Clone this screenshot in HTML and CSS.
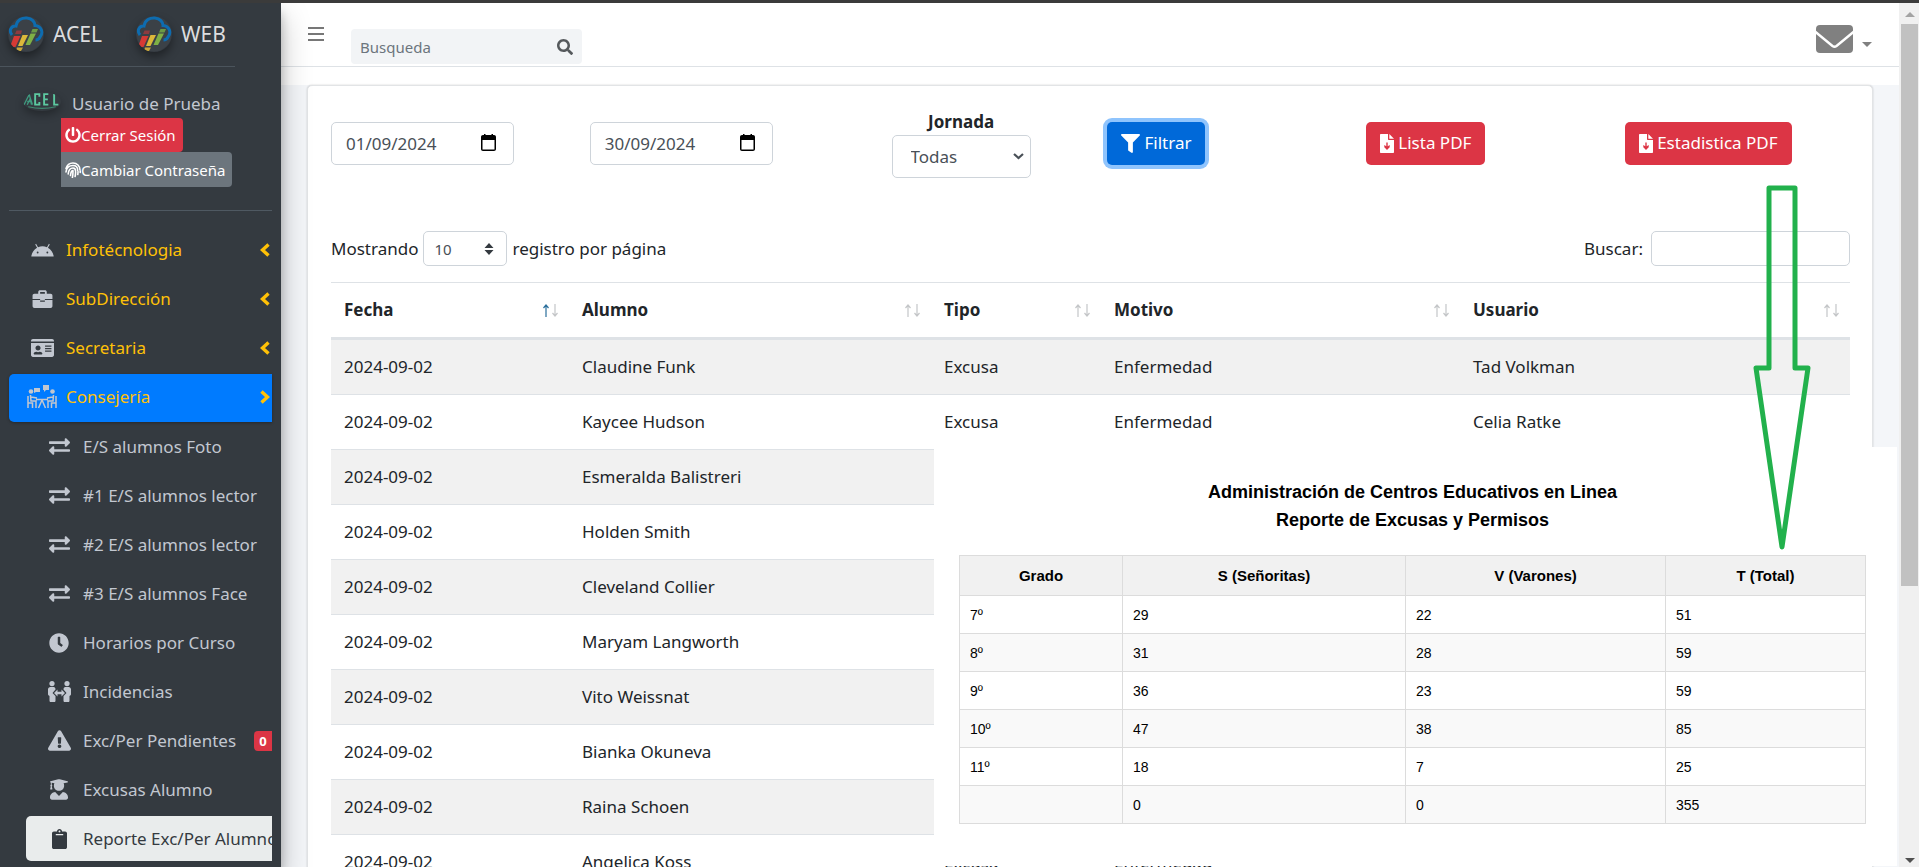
FILE: index.html
```html
<!DOCTYPE html>
<html lang="es">
<head>
<meta charset="utf-8">
<title>ACEL WEB</title>
<link rel="stylesheet" href="styles.css">
</head>
<body>
<svg class="sprite" aria-hidden="true">
  <symbol id="logo" viewBox="0 0 36 36">
    <circle cx="18" cy="18" r="17.500" fill="#3b4147"/>
    <path d="M4 19C0 14 4 9.500 8 10C9 4 14 1.500 19 2C24 2.500 27 6 27 9.500C33 10 36 16 32 21C31 23 29 24 27.500 24" fill="none" stroke="#0d6cb0" stroke-width="3"/>
    <path d="M6 20h6.500l-5 11H2z" fill="#d63a35"/><path d="M8.500 14.500H14L13 18H7z" fill="#8d3b3f"/>
    <path d="M14.500 19H20l-5.500 11H10z" fill="#dcb83a"/><path d="M9 31.500h6L13 35H8z" fill="#c9a83a"/>
    <path d="M22.500 17.500H28L22 29h-4.500z" fill="#7fb045"/><path d="M24.500 13H30l-1.500 3.500H23z" fill="#6b9a45"/>
  </symbol>
  <symbol id="power" viewBox="0 0 512 512"><path d="M400 54.1c63 45 104 118.600 104 201.900 0 136.800-110.800 247.700-247.500 248C120 504.300 8.200 393 8 256.400 7.900 173.100 48.900 99.300 111.800 54.200c11.700-8.300 28-4.800 35 7.700L162.600 90c5.900 10.500 3.100 23.800-6.600 31-41.500 30.800-68 79.600-68 134.900-.1 92.300 74.500 168.100 168 168.100 91.600 0 168.600-74.200 168-169.100-.3-51.800-24.700-101.800-68.100-134-9.700-7.200-12.400-20.500-6.500-30.900l15.800-28.100c7-12.400 23.200-16.100 34.800-7.800zM296 264V24c0-13.300-10.700-24-24-24h-32c-13.300 0-24 10.700-24 24v240c0 13.300 10.700 24 24 24h32c13.300 0 24-10.700 24-24z"/></symbol>
  <symbol id="finger" viewBox="0 0 16 16"><path d="M1 6.500C2 3 5 1 8 1c4 0 7 3 7 7M1 10C1.500 6 4 3.500 8 3.500c3 0 4.700 2 4.700 5M3.200 12C3.500 8.500 4.500 6 8 6c2 0 2.600 1.500 2.600 3.500M5.500 13.500C6 11 5.800 8.500 8 8.500M8 9c0 2 0 4-.6 6.500M10.600 10c0 1.500-.1 3-.5 4.500M13 9.500c0 1.200 0 2-.2 3M15.200 9v1.500" fill="none" stroke="currentColor" stroke-width="1.600" stroke-linecap="round"/></symbol>
  <symbol id="android" viewBox="0 0 24 15"><path d="M0 14.500C.4 10.500 2.800 7 6.200 5L4.200 1.500 5.100.9 7.200 4.500a12 12 0 0 1 9.600 0L18.900.9l.9.600-2 3.500c3.400 2 5.800 5.500 6.200 9.500zM6.800 9.200a1 1 0 1 0 0 2 1 1 0 0 0 0-2zm10.400 0a1 1 0 1 0 0 2 1 1 0 0 0 0-2z"/></symbol>
  <symbol id="case" viewBox="0 0 21 19"><path fill-rule="evenodd" d="M6 4V2.200C6 1 6.800.3 8 .3h5c1.200 0 2 .7 2 1.900V4h4c1.200 0 2 .8 2 2v3.500H13V11H8V9.500H0V6c0-1.200.8-2 2-2zm2 0h5V2.200H8zM0 10.500h8v1.800h5v-1.800h8V17c0 1.200-.8 2-2 2H2c-1.200 0-2-.8-2-2z"/></symbol>
  <symbol id="idcard" viewBox="0 32 576 448"><path d="M528 32H48C21.500 32 0 53.500 0 80v16h576V80c0-26.500-21.500-48-48-48zM0 432c0 26.500 21.500 48 48 48h480c26.500 0 48-21.500 48-48V128H0v304zM352 192h160v32H352zm0 64h160v32H352zm0 64h160v32H352zM176 192c35.300 0 64 28.700 64 64s-28.700 64-64 64-64-28.700-64-64 28.700-64 64-64zM67.100 396.200C75.500 370.500 99.600 352 128 352h8.200c12.300 5.100 25.700 8 39.800 8s27.600-2.900 39.800-8h8.200c28.400 0 52.500 18.500 60.900 44.200 3.200 9.900-5.200 19.800-15.600 19.800H82.700c-10.400 0-18.800-10-15.600-19.800z" fill-rule="evenodd"/></symbol>
  <symbol id="meeting" viewBox="0 0 30 24"><path d="M7 3h6v4H9L7 8zM16 0h6v5h-3l-2 2V5h-1z"/><circle cx="4" cy="6.500" r="2.300"/><circle cx="25.500" cy="6.500" r="2.300"/><path d="M1 11v12M29 11v12M3.500 10l.5 6h5v7M26.500 10l-.5 6h-5v7M4 12l6 1M26 12l-6 1M9 14.500h12M15 15l-3.500 8M15 15l3.500 8M1.500 18h4v5M28.500 18h-4v5" fill="none" stroke="currentColor" stroke-width="1.500"/></symbol>
  <symbol id="chev" viewBox="0 0 10 14"><path d="M8.500 1.500L2.500 7l6 5.500" fill="none" stroke="currentColor" stroke-width="3.400"/></symbol>
  <symbol id="swap" viewBox="0 50 512 412"><path d="M0 168v-16c0-13.255 10.745-24 24-24h360V80c0-21.367 25.899-32.042 40.971-16.971l80 80c9.372 9.373 9.372 24.569 0 33.941l-80 80C409.956 271.982 384 261.456 384 240v-48H24c-13.255 0-24-10.745-24-24zm488 152H128v-48c0-21.314-25.862-32.080-40.971-16.971l-80 80c-9.372 9.373-9.372 24.569 0 33.941l80 80C102.057 463.997 128 453.437 128 432v-48h360c13.255 0 24-10.745 24-24v-16c0-13.255-10.745-24-24-24z"/></symbol>
  <symbol id="clock" viewBox="0 0 512 512"><path d="M256,8C119,8,8,119,8,256S119,504,256,504,504,393,504,256,393,8,256,8Zm92.490,313h0l-20,25a16,16,0,0,1-22.490,2.500h0l-67-49.720a40,40,0,0,1-15-31.230V112a16,16,0,0,1,16-16h32a16,16,0,0,1,16,16V256l58,42.500A16,16,0,0,1,348.490,321Z"/></symbol>
  <symbol id="people" viewBox="0 0 23 21"><circle cx="4" cy="2.600" r="2.600"/><circle cx="19" cy="2.600" r="2.600"/><path d="M2.500 6h3C7 6 7.500 7 7.500 8.500L4.500 12l3 3v4.500c0 1-.5 1.500-1.500 1.500H3c-1 0-1.500-.5-1.500-1.500V15C.5 14.500 0 14 0 13V8.500C0 7 1 6 2.500 6zM20.500 6h-3C16 6 15.500 7 15.500 8.500l3 3.500-3 3v4.500c0 1 .5 1.500 1.500 1.500h3c1 0 1.500-.5 1.500-1.500V15c1-.5 1.500-1 1.500-2V8.500C23 7 22 6 20.500 6zM9.500 8.500v2.300h4V8.500L17 12l-3.500 3.500v-2.300h-4v2.300L6 12z"/></symbol>
  <symbol id="warn" viewBox="0 0 576 512"><path d="M569.517 440.013C587.975 472.007 564.806 512 527.940 512H48.054c-36.937 0-59.999-40.055-41.577-71.987L246.423 23.985c18.467-32.009 64.720-31.951 83.154 0l239.940 416.028zM288 354c-25.405 0-46 20.595-46 46s20.595 46 46 46 46-20.595 46-46-20.595-46-46-46zm-43.673-165.346l7.418 136c.347 6.364 5.609 11.346 11.982 11.346h48.546c6.373 0 11.635-4.982 11.982-11.346l7.418-136c.375-6.874-5.098-12.654-11.982-12.654h-63.383c-6.884 0-12.356 5.780-11.981 12.654z"/></symbol>
  <symbol id="grad" viewBox="0 0 448 512"><path d="M319.400 320.600L224 416l-95.400-95.400C57.100 323.700 0 382.200 0 454.400v9.600c0 26.500 21.500 48 48 48h352c26.500 0 48-21.500 48-48v-9.600c0-72.200-57.100-130.700-128.600-133.800zM13.600 79.800l6.400 1.500v58.400c-7 4.200-12 11.500-12 20.300 0 8.400 4.600 15.400 11.100 19.700L3.500 242c-1.700 6.900 2.100 14 7.600 14h41.800c5.500 0 9.300-7.100 7.600-14l-15.600-62.300C51.400 175.400 56 168.400 56 160c0-8.800-5-16.100-12-20.300V87.100l66 15.900c-8.600 17.200-14 36.400-14 57 0 70.700 57.300 128 128 128s128-57.300 128-128c0-20.600-5.300-39.800-14-57l96.300-23.200c18.200-4.400 18.200-27.100 0-31.500l-190.400-46c-13-3.100-26.700-3.100-39.700 0L13.600 48.200c-18.100 4.400-18.100 27.200 0 31.600z"/></symbol>
  <symbol id="clip" viewBox="0 0 384 512"><path d="M384 112v352c0 26.510-21.490 48-48 48H48c-26.510 0-48-21.490-48-48V112c0-26.510 21.490-48 48-48h80c0-35.290 28.710-64 64-64s64 28.710 64 64h80c26.510 0 48 21.490 48 48zM192 40c-13.255 0-24 10.745-24 24s10.745 24 24 24 24-10.745 24-24-10.745-24-24-24m96 114v-20a6 6 0 0 0-6-6H102a6 6 0 0 0-6 6v20a6 6 0 0 0 6 6h180a6 6 0 0 0 6-6z"/></symbol>
  <symbol id="search" viewBox="0 0 512 512"><path d="M505 442.700L405.300 343c-4.500-4.500-10.600-7-17-7H372c27.600-35.300 44-79.700 44-128C416 93.100 322.900 0 208 0S0 93.100 0 208s93.100 208 208 208c48.300 0 92.700-16.400 128-44v16.300c0 6.400 2.500 12.500 7 17l99.700 99.700c9.400 9.400 24.600 9.400 33.900 0l28.300-28.300c9.400-9.400 9.400-24.600.1-34zM208 336c-70.700 0-128-57.200-128-128 0-70.700 57.200-128 128-128 70.700 0 128 57.200 128 128 0 70.700-57.200 128-128 128z"/></symbol>
  <symbol id="mail" viewBox="0 0 37 28"><rect width="37" height="28" rx="4"/><path d="M-1 6.500L16.500 21q2 1.500 4 0L38 6.500" fill="none" stroke="#fff" stroke-width="2.400"/></symbol>
  <symbol id="filter" viewBox="0 0 512 512"><path d="M487.976 0H24.028C2.710 0-8.047 25.866 7.058 40.971L192 225.941V432c0 7.831 3.821 15.170 10.237 19.662l80 55.980C298.020 518.690 320 507.493 320 487.980V225.941l184.947-184.970C520.021 25.896 509.338 0 487.976 0z"/></symbol>
  <symbol id="file" viewBox="0 0 14 19"><path fill-rule="evenodd" d="M8 0v5c0 .6.400 1 1 1h5v12c0 .6-.4 1-1 1H1c-.6 0-1-.4-1-1V1c0-.6.400-1 1-1zM6.300 8.500v3.800l-2-1.300v2.200L7 16l2.700-2.800V11l-2 1.300V8.500z"/><path d="M9.300 0L14 4.700H9.300z"/></symbol>
  <symbol id="cal" viewBox="0 0 15 17"><path fill-rule="evenodd" d="M2 1h1V0h1.500v1h6V0H12v1h1c1.200 0 2 .8 2 2v12c0 1.200-.8 2-2 2H2c-1.200 0-2-.8-2-2V3c0-1.200.8-2 2-2zM1.500 6v9.500h12V6z"/></symbol>
  <symbol id="updown" viewBox="0 0 10 12"><path d="M5 0l4.500 5h-9zM5 12l4.500-5h-9z"/></symbol>
  <symbol id="down" viewBox="0 0 11 7"><path d="M1 1l4.500 4L10 1" fill="none" stroke="currentColor" stroke-width="2.200"/></symbol>
  <symbol id="sort-up" viewBox="0 0 6 13"><path d="M3 13V1M.5 4L3 1l2.500 3" fill="none" stroke="currentColor" stroke-width="1.200"/></symbol>
  <symbol id="sort-down" viewBox="0 0 6 13"><path d="M3 0v12M.5 9L3 12l2.500-3" fill="none" stroke="currentColor" stroke-width="1.200"/></symbol>
</svg>

<div class="strip"></div>
<div class="app">
  <aside class="sidebar">
    <div class="brand">
      <a href="#"><svg class="logo"><use href="#logo"/></svg>ACEL</a>
      <a href="#"><svg class="logo"><use href="#logo"/></svg>WEB</a>
    </div>
    <div class="user">
      <svg class="avatar" viewBox="0 0 36 18">
        <path d="M1 12L6 2l2 10M4 12l3-6 2 6M4 9h4" fill="none" stroke="#3f9c80" stroke-width="1.200"/>
        <path d="M15.500 4.500V2h-4v10h4V9.500M24 2h-4v10h4M20 7h3.500M29.500 2v10h4" fill="none" stroke="#5cc9a0" stroke-width="1.800"/>
        <path d="M5 14q13 3 26 0" fill="none" stroke="#3f8a70" stroke-width="1"/>
      </svg>
      <div class="user-info">
        <a class="user-name" href="#">Usuario de Prueba</a>
        <button class="side-btn red"><svg><use href="#power"/></svg>Cerrar Sesión</button>
        <button class="side-btn gray"><svg><use href="#finger"/></svg>Cambiar Contraseña</button>
      </div>
    </div>
    <nav class="menu">
      <a class="item" href="#"><span class="ico"><svg width="23" height="14"><use href="#android"/></svg></span>Infotécnologia<svg class="chev"><use href="#chev"/></svg></a>
      <a class="item" href="#"><span class="ico"><svg width="21" height="18"><use href="#case"/></svg></span>SubDirección<svg class="chev"><use href="#chev"/></svg></a>
      <a class="item" href="#"><span class="ico"><svg width="23" height="18"><use href="#idcard"/></svg></span>Secretaria<svg class="chev"><use href="#chev"/></svg></a>
      <a class="item open" href="#"><span class="ico"><svg width="30" height="24"><use href="#meeting"/></svg></span>Consejería<svg class="chev"><use href="#chev"/></svg></a>
    </nav>
    <nav class="submenu">
      <a class="sub" href="#"><span class="ico"><svg width="21" height="17"><use href="#swap"/></svg></span>E/S alumnos Foto</a>
      <a class="sub" href="#"><span class="ico"><svg width="21" height="17"><use href="#swap"/></svg></span>#1 E/S alumnos lector</a>
      <a class="sub" href="#"><span class="ico"><svg width="21" height="17"><use href="#swap"/></svg></span>#2 E/S alumnos lector</a>
      <a class="sub" href="#"><span class="ico"><svg width="21" height="17"><use href="#swap"/></svg></span>#3 E/S alumnos Face</a>
      <a class="sub" href="#"><span class="ico"><svg width="20" height="20"><use href="#clock"/></svg></span>Horarios por Curso</a>
      <a class="sub" href="#"><span class="ico"><svg width="23" height="21"><use href="#people"/></svg></span>Incidencias</a>
      <a class="sub" href="#"><span class="ico"><svg width="23" height="21"><use href="#warn"/></svg></span>Exc/Per Pendientes<span class="badge">0</span></a>
      <a class="sub" href="#"><span class="ico"><svg width="18" height="21"><use href="#grad"/></svg></span>Excusas Alumno</a>
      <a class="sub current" href="#"><span class="ico"><svg width="15" height="20"><use href="#clip"/></svg></span>Reporte Exc/Per Alumno</a>
    </nav>
  </aside>

  <main class="main">
    <header class="navbar">
      <button class="burger" aria-label="Menú"><i></i><i></i><i></i></button>
      <form class="find">
        <input type="text" placeholder="Busqueda" aria-label="Busqueda">
        <button type="button" aria-label="Buscar"><svg><use href="#search"/></svg></button>
      </form>
      <button class="mail" aria-label="Mensajes"><svg><use href="#mail"/></svg><i></i></button>
    </header>
    <div class="band"></div>
    <section class="card">
      <form class="filters">
        <div class="date"><input type="text" value="01/09/2024" aria-label="Desde"><svg><use href="#cal"/></svg></div>
        <div class="date"><input type="text" value="30/09/2024" aria-label="Hasta"><svg><use href="#cal"/></svg></div>
        <div class="shift">
          <label for="shift">Jornada</label>
          <span class="pick"><select id="shift"><option>Todas</option></select><svg><use href="#down"/></svg></span>
        </div>
        <button type="button" class="btn blue"><svg width="19" height="19"><use href="#filter"/></svg>Filtrar</button>
        <button type="button" class="btn danger"><svg width="14" height="19"><use href="#file"/></svg>Lista PDF</button>
        <button type="button" class="btn danger"><svg width="14" height="19"><use href="#file"/></svg>Estadistica PDF</button>
      </form>
      <div class="tools">
        <label class="len">Mostrando <span class="pick small"><select><option>10</option></select><svg><use href="#updown"/></svg></span> registro por página</label>
        <label class="seek">Buscar: <input type="search"></label>
      </div>
      <table class="data">
        <colgroup><col class="c1"><col class="c2"><col class="c3"><col class="c4"><col></colgroup>
        <thead><tr>
          <th class="asc"><div>Fecha<span class="sort"><svg><use href="#sort-up"/></svg><svg><use href="#sort-down"/></svg></span></div></th>
          <th><div>Alumno<span class="sort"><svg><use href="#sort-up"/></svg><svg><use href="#sort-down"/></svg></span></div></th>
          <th><div>Tipo<span class="sort"><svg><use href="#sort-up"/></svg><svg><use href="#sort-down"/></svg></span></div></th>
          <th><div>Motivo<span class="sort"><svg><use href="#sort-up"/></svg><svg><use href="#sort-down"/></svg></span></div></th>
          <th><div>Usuario<span class="sort"><svg><use href="#sort-up"/></svg><svg><use href="#sort-down"/></svg></span></div></th>
        </tr></thead>
        <tbody>
          <tr><td>2024-09-02</td><td>Claudine Funk</td><td>Excusa</td><td>Enfermedad</td><td>Tad Volkman</td></tr>
          <tr><td>2024-09-02</td><td>Kaycee Hudson</td><td>Excusa</td><td>Enfermedad</td><td>Celia Ratke</td></tr>
          <tr><td>2024-09-02</td><td>Esmeralda Balistreri</td><td></td><td></td><td></td></tr>
          <tr><td>2024-09-02</td><td>Holden Smith</td><td></td><td></td><td></td></tr>
          <tr><td>2024-09-02</td><td>Cleveland Collier</td><td></td><td></td><td></td></tr>
          <tr><td>2024-09-02</td><td>Maryam Langworth</td><td></td><td></td><td></td></tr>
          <tr><td>2024-09-02</td><td>Vito Weissnat</td><td></td><td></td><td></td></tr>
          <tr><td>2024-09-02</td><td>Bianka Okuneva</td><td></td><td></td><td></td></tr>
          <tr><td>2024-09-02</td><td>Raina Schoen</td><td></td><td></td><td></td></tr>
          <tr><td>2024-09-02</td><td>Angelica Koss</td><td>Excusa</td><td>Enfermedad</td><td></td></tr>
        </tbody>
      </table>
    </section>
  </main>
  <div class="scroll"><i class="up"></i><div class="thumb"></div><i class="dn"></i></div>
</div>

<section class="report">
  <h2>Administración de Centros Educativos en Linea</h2>
  <h2>Reporte de Excusas y Permisos</h2>
  <table>
    <colgroup><col class="g1"><col class="g2"><col class="g3"><col></colgroup>
    <thead><tr><th>Grado</th><th>S (Señoritas)</th><th>V (Varones)</th><th>T (Total)</th></tr></thead>
    <tbody>
      <tr><td>7º</td><td>29</td><td>22</td><td>51</td></tr>
      <tr><td>8º</td><td>31</td><td>28</td><td>59</td></tr>
      <tr><td>9º</td><td>36</td><td>23</td><td>59</td></tr>
      <tr><td>10º</td><td>47</td><td>38</td><td>85</td></tr>
      <tr><td>11º</td><td>18</td><td>7</td><td>25</td></tr>
      <tr><td></td><td>0</td><td>0</td><td>355</td></tr>
    </tbody>
  </table>
</section>
<svg class="arrow" viewBox="0 0 60 368" aria-hidden="true"><path d="M17 4H43V184H56L30 363L4 184H17Z" fill="none" stroke="#22b14c" stroke-width="5" stroke-linejoin="round"/></svg>
</body>
</html>
```

FILE: styles.css
```css
* { box-sizing: border-box; }
body {
  margin: 0;
  height: 100vh;
  display: flex;
  flex-direction: column;
  overflow: hidden;
  position: relative;
  background: #f4f6f9;
  color: #212529;
  font: 17px/28px "Noto Sans", "Open Sans", sans-serif;
}
.sprite { display: none; }
svg { fill: currentColor; flex: none; }
a { color: inherit; text-decoration: none; }
button, input, select { font: inherit; color: inherit; margin: 0; }
button { border: 0; background: none; padding: 0; cursor: pointer; }

.strip { height: 3px; flex: none; background: #3b3b3b; }
.app { flex: 1; min-height: 0; display: flex; overflow: hidden; }

/* Sidebar */
.sidebar {
  width: 281px;
  flex: none;
  padding-right: 9px;
  background: #343a40;
  color: #c2c7d0;
  box-shadow: 0 14px 28px rgba(0,0,0,.25), 0 10px 10px rgba(0,0,0,.22);
  position: relative;
  overflow: hidden;
}
.brand {
  width: 235px;
  height: 64px;
  padding-left: 8px;
  display: flex;
  border-bottom: 1px solid #4b545c;
  font-size: 21px;
  color: #dcdddf;
}
.brand a { width: 128px; flex: none; display: flex; align-items: center; gap: 9px; height: 62px; }
.logo { width: 36px; height: 36px; border-radius: 50%; box-shadow: 0 5px 10px rgba(0,0,0,.4); }
.user {
  margin-left: 9px;
  padding: 23px 0 23px 14px;
  display: flex;
  border-bottom: 1px solid #4f5962;
}
.avatar { width: 38px; height: 19px; margin-top: 2px; border-radius: 50%; box-shadow: 0 4px 8px rgba(0,0,0,.3); }
.user-info { display: flex; flex-direction: column; align-items: flex-start; }
.user-name { padding-left: 11px; }
.side-btn {
  height: 34px;
  padding: 0 7px 0 4px;
  display: flex;
  align-items: center;
  border-radius: 0 4px 4px 0;
  color: #fff;
  font-size: 15px;
}
.side-btn svg { width: 16px; height: 16px; }
.red { background: #dc3545; }
.gray { background: #6c757d; height: 35px; }

.menu { margin: 16px 0 2px 9px; display: grid; gap: 1px; }
.item {
  height: 48px;
  padding: 0 2px 2px 0;
  display: flex;
  align-items: center;
  border-radius: 5px 0 0 5px;
  color: #ffc107;
}
.ico { width: 48px; flex: none; margin-left: 9px; display: flex; justify-content: center; color: #c2c7d0; }
.chev { width: 10px; height: 14px; margin-left: auto; }
.open { background: #007bff; box-shadow: 0 1px 3px rgba(0,0,0,.3); }
.open .chev { transform: rotate(180deg); }
.submenu { margin-left: 26px; display: grid; gap: 4px; }
.sub {
  height: 45px;
  display: flex;
  align-items: center;
  border-radius: 5px 0 0 5px;
  overflow: hidden;
  white-space: nowrap;
}
.current { background: #e9ecec; color: #343a40; }
.current .ico { color: #343a40; }
.badge {
  width: 18px;
  margin-left: auto;
  border-radius: 4px 0 0 4px;
  background: #dc3545;
  color: #fff;
  font-size: 13px;
  font-weight: 700;
  line-height: 20px;
  text-align: center;
}

/* Main column */
.main { flex: 1; min-width: 0; }
.navbar {
  height: 64px;
  padding: 0 27px;
  display: flex;
  align-items: flex-start;
  background: #fff;
  border-bottom: 1px solid #dee2e6;
  color: #808080;
}
.burger { width: 16px; margin-top: 24px; display: grid; gap: 4px; }
.burger i { height: 2px; background: #777; }
.find {
  width: 231px;
  height: 35px;
  margin: 26px 0 0 27px;
  padding: 0 9px;
  display: flex;
  align-items: center;
  border-radius: 4px;
  background: #f2f4f6;
  color: #55595c;
  font-size: 15px;
}
.find input { flex: 1; min-width: 0; border: 0; outline: 0; padding: 0; background: none; }
.find input::placeholder { color: #6c757d; opacity: 1; }
.find svg { width: 16px; height: 16px; display: block; }
.mail { margin: 22px 0 0 auto; display: flex; align-items: flex-end; gap: 9px; }
.mail svg { width: 37px; height: 28px; color: #808080; }
.mail i { margin-bottom: 6px; border: 5px solid transparent; border-top-color: #808080; border-bottom: 0; }
.band { height: 18px; background: #fff; }

.card {
  margin: 0 26px;
  padding: 22px 22px 22px 23px;
  background: #fff;
  border: 1px solid #e2e4e6;
  border-radius: 5px;
  box-shadow: 0 0 2px rgba(0,0,0,.2);
}
.filters { display: grid; grid-template-columns: repeat(6, 1fr); gap: 34px; align-items: center; justify-items: start; }
.date { position: relative; width: 183px; }
.date input, .pick select, .seek input {
  width: 100%;
  height: 43px;
  padding: 0 14px;
  border: 1px solid #ced4da;
  border-radius: 5px;
  background: #fff;
  color: #495057;
  outline: 0;
  appearance: none;
}
.date svg { position: absolute; right: 18px; top: 12px; width: 15px; height: 17px; color: #000; }
.shift { justify-self: stretch; display: grid; justify-items: center; line-height: 27px; }
.shift label { font-weight: 700; }
.pick { position: relative; display: block; width: 139px; }
.pick select { padding: 0 18px; }
.pick svg { position: absolute; right: 7px; top: 18px; width: 11px; height: 7px; color: #495057; }
.btn {
  height: 43px;
  padding: 0 14px;
  display: flex;
  align-items: center;
  gap: 4px;
  border-radius: 5px;
  color: #fff;
}
.blue { background: #0069d9; box-shadow: 0 0 0 4px #8fc4fd; }
.danger { background: #dc3545; }

.tools { margin: 53px 0 16px; display: flex; justify-content: space-between; }
.len, .seek { display: flex; align-items: center; gap: 5px; height: 35px; }
.pick.small { width: 84px; }
.pick.small select { height: 35px; padding: 0 10px; font-size: 15px; }
.pick.small svg { right: 13px; top: 12px; width: 10px; height: 12px; color: #343a40; }
.seek { gap: 8px; }
.seek input { width: 199px; height: 35px; }

.data { width: 100%; table-layout: fixed; border-collapse: separate; border-spacing: 0; }
.c1 { width: 238px; }
.c2 { width: 362px; }
.c3 { width: 170px; }
.c4 { width: 359px; }
.data th { padding: 13px 11px 13px 13px; border-top: 1px solid #dee2e6; border-bottom: 3px solid #dee2e6; text-align: left; }
.data th div { display: flex; align-items: center; justify-content: space-between; }
.sort { display: flex; gap: 3px; color: #c4c6c8; }
.sort svg { width: 6px; height: 13px; }
.asc .sort svg:first-child { color: #2b6f9c; }
.data td { height: 55px; padding: 13px; border-top: 1px solid #dee2e6; }
.data tbody tr:first-child td { height: 54px; padding: 12px 13px 13px; border-top: 0; }
.data tbody tr:nth-child(odd) { background: #f1f1f1; }

/* Scroll gutter */
.scroll {
  width: 20px;
  flex: none;
  padding: 9px 1px 4px 2px;
  display: flex;
  flex-direction: column;
  align-items: center;
  background: #f0f0f0;
}
.thumb { width: 17px; height: 66%; margin-top: 7px; background: #c1c1c1; }
.up { border: 5px solid transparent; border-bottom-color: #a3a3a3; border-top: 0; }
.dn { margin-top: auto; border: 5px solid transparent; border-top-color: #505050; border-bottom: 0; }

/* Report sheet laid over the list */
.report {
  position: absolute;
  left: 934px;
  right: 22px;
  top: 447px;
  padding: 31px 31px 42px 25px;
  background: #fff;
  color: #000;
  font: 14px/28px "Liberation Sans", Arial, sans-serif;
}
.report h2 { margin: 0; font-size: 18px; line-height: 28px; text-align: center; }
.report table { width: 100%; margin-top: 21px; table-layout: fixed; border-collapse: collapse; }
.report th, .report td { border: 1px solid #dcdcdc; padding: 0 10px; height: 38px; text-align: left; }
.report th { height: 40px; background: #f1f1f1; font-size: 15px; text-align: center; }
.report tr:nth-child(even) td { background: #f9f9f9; }
.g1 { width: 163px; }
.g2 { width: 283px; }
.g3 { width: 260px; }

.arrow { position: absolute; left: 1752px; top: 184px; width: 60px; height: 368px; }
```
